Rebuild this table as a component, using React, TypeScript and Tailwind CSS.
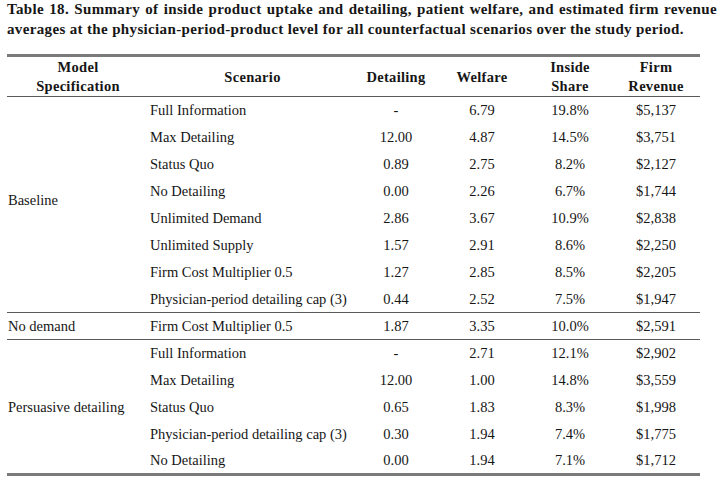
import React from "react";

type Row = { scen: string; d: string; w: string; s: string; r: string };

const baseline: Row[] = [
  { scen: "Full Information", d: "-", w: "6.79", s: "19.8%", r: "$5,137" },
  { scen: "Max Detailing", d: "12.00", w: "4.87", s: "14.5%", r: "$3,751" },
  { scen: "Status Quo", d: "0.89", w: "2.75", s: "8.2%", r: "$2,127" },
  { scen: "No Detailing", d: "0.00", w: "2.26", s: "6.7%", r: "$1,744" },
  { scen: "Unlimited Demand", d: "2.86", w: "3.67", s: "10.9%", r: "$2,838" },
  { scen: "Unlimited Supply", d: "1.57", w: "2.91", s: "8.6%", r: "$2,250" },
  { scen: "Firm Cost Multiplier 0.5", d: "1.27", w: "2.85", s: "8.5%", r: "$2,205" },
  { scen: "Physician-period detailing cap (3)", d: "0.44", w: "2.52", s: "7.5%", r: "$1,947" },
];

const noDemand: Row[] = [
  { scen: "Firm Cost Multiplier 0.5", d: "1.87", w: "3.35", s: "10.0%", r: "$2,591" },
];

const persuasive: Row[] = [
  { scen: "Full Information", d: "-", w: "2.71", s: "12.1%", r: "$2,902" },
  { scen: "Max Detailing", d: "12.00", w: "1.00", s: "14.8%", r: "$3,559" },
  { scen: "Status Quo", d: "0.65", w: "1.83", s: "8.3%", r: "$1,998" },
  { scen: "Physician-period detailing cap (3)", d: "0.30", w: "1.94", s: "7.4%", r: "$1,775" },
  { scen: "No Detailing", d: "0.00", w: "1.94", s: "7.1%", r: "$1,712" },
];

function Group({ label, rows, last, labelClass }: { label: string; rows: Row[]; last?: boolean; labelClass?: string }) {
  return (
    <>
      {rows.map((row, i) => (
        <tr
          key={i}
          className={
            "h-[27px] " +
            (i === rows.length - 1
              ? last
                ? "border-b-[3px] border-[#7a7a7a]"
                : "border-b border-[#5a5a5a]"
              : "")
          }
        >
          {i === 0 && (
            <td rowSpan={rows.length} className={"p-0 pl-[1px] align-middle text-left " + (labelClass ?? "")}>
              {label}
            </td>
          )}
          <td className="p-0 pl-[1px] text-left whitespace-nowrap">{row.scen}</td>
          <td className="p-0 text-center">{row.d}</td>
          <td className="p-0 text-center">{row.w}</td>
          <td className="p-0 text-center">{row.s}</td>
          <td className="p-0 text-center">{row.r}</td>
        </tr>
      ))}
    </>
  );
}

export default function App() {
  return (
    <div className="w-[720px] h-[483px] overflow-hidden bg-white text-[#161616] pl-[7px] font-['Liberation_Serif','DejaVu_Serif',serif]">
      <div className="w-[710px] font-bold text-[15px] leading-[19.5px] tracking-[0.35px] whitespace-nowrap">
        <div className="text-justify [text-align-last:justify]">
          Table 18. Summary of inside product uptake and detailing, patient welfare, and estimated firm revenue
        </div>
        <div>averages at the physician-period-product level for all counterfactual scenarios over the study period.</div>
      </div>
      <table className="mt-[15px] w-[693px] table-fixed border-collapse text-[14.5px] leading-[18px]">
        <colgroup>
          <col className="w-[142px]" />
          <col className="w-[207px]" />
          <col className="w-[80px]" />
          <col className="w-[92px]" />
          <col className="w-[84px]" />
          <col className="w-[88px]" />
        </colgroup>
        <thead>
          <tr className="h-[41px] border-t-[3px] border-b border-t-[#7a7a7a] border-b-[#5a5a5a] font-bold tracking-[0.3px]">
            <th className="p-0 pt-[1px] text-center font-bold leading-[19px]">
              Model
              <br />
              Specification
            </th>
            <th className="p-0 text-center font-bold">Scenario</th>
            <th className="p-0 text-center font-bold">Detailing</th>
            <th className="p-0 text-center font-bold">Welfare</th>
            <th className="p-0 pt-[1px] text-center font-bold leading-[19px]">
              Inside
              <br />
              Share
            </th>
            <th className="p-0 pt-[1px] text-center font-bold leading-[19px]">
              Firm
              <br />
              Revenue
            </th>
          </tr>
        </thead>
        <tbody>
          <Group label="Baseline" rows={baseline} labelClass="pb-[10px]" />
          <Group label="No demand" rows={noDemand} />
          <Group label="Persuasive detailing" rows={persuasive} last />
        </tbody>
      </table>
    </div>
  );
}
